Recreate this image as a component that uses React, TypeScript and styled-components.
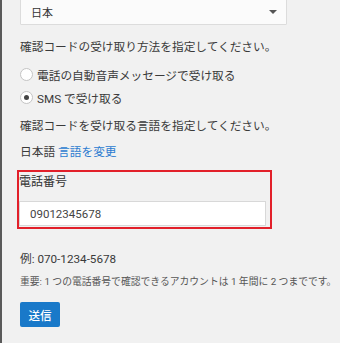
import React, { useState } from 'react';
import styled, { createGlobalStyle } from 'styled-components';

const GlobalStyle = createGlobalStyle`
  html, body {
    margin: 0;
    padding: 0;
    background: #f1f1f1;
  }
  * {
    box-sizing: border-box;
  }
`;

const Page = styled.div`
  width: 340px;
  height: 343px;
  overflow: hidden;
  background: #f1f1f1;
  border-left: 2px solid #5a5a5a;
  padding-left: 18px;
  font-family: Roboto, 'Noto Sans CJK JP', sans-serif;
  color: #3a3a3a;
`;

const Select = styled.div`
  width: 267px;
  height: 26px;
  margin-top: -1px;
  background: #fbfbfb;
  border: 1px solid #dcdcdc;
  border-radius: 1px;
  display: flex;
  align-items: center;
  justify-content: space-between;
  padding: 0 9px 0 10px;
  font-size: 11px;
  color: #333;
`;

const Caret = styled.span`
  width: 0;
  height: 0;
  border-left: 4px solid transparent;
  border-right: 4px solid transparent;
  border-top: 4px solid #555;
`;

const Text = styled.div<{ $mt: number }>`
  margin-top: ${({ $mt }) => $mt}px;
  font-size: 11.7px;
  line-height: 20px;
  white-space: nowrap;
`;

const RadioList = styled.div`
  margin-top: 6px;
`;

const RadioRow = styled.label`
  display: flex;
  align-items: center;
  height: 23px;
  gap: 4px;
  font-size: 11.7px;
  cursor: pointer;
`;

const RadioCircle = styled.span<{ $checked: boolean }>`
  width: 13px;
  height: 13px;
  border-radius: 50%;
  border: 1px solid #c4c4c4;
  background: #fff;
  display: flex;
  align-items: center;
  justify-content: center;
  &::after {
    content: '';
    width: 5px;
    height: 5px;
    border-radius: 50%;
    background: ${({ $checked }) => ($checked ? '#444' : 'transparent')};
  }
`;

const Link = styled.a`
  color: #2b7bd0;
  text-decoration: none;
  margin-left: 3px;
`;

const Highlight = styled.div`
  margin-top: 8px;
  margin-left: -3px;
  width: 255px;
  border: 2px solid #e2202a;
  padding: 0 0 1px 0;
`;

const FieldLabel = styled.div`
  font-size: 12px;
  line-height: 20px;
  font-weight: 400;
  color: #333;
`;

const PhoneInput = styled.input`
  display: block;
  margin-top: 9px;
  width: 247px;
  height: 25px;
  border: 1px solid #d8d8d8;
  background: #fff;
  padding: 0 10px;
  font-family: Roboto, 'Noto Sans CJK JP', sans-serif;
  font-size: 11.5px;
  color: #444;
  outline: none;
`;

const Note = styled.div`
  margin-top: 5px;
  font-size: 9.8px;
  line-height: 16px;
  color: #555;
  white-space: nowrap;
`;

const SubmitButton = styled.button`
  margin-top: 12px;
  width: 40px;
  height: 25px;
  border: none;
  border-radius: 2px;
  background: #1979c9;
  color: #fff;
  font-family: Roboto, 'Noto Sans CJK JP', sans-serif;
  font-size: 11.5px;
  font-weight: 500;
  padding: 0;
`;

const options = [
  { value: 'voice', label: '電話の自動音声メッセージで受け取る' },
  { value: 'sms', label: 'SMS で受け取る' },
];

const App = () => {
  const [method, setMethod] = useState('sms');
  const [phone, setPhone] = useState('09012345678');

  return (
    <Page>
      <GlobalStyle />
      <Select>
        日本
        <Caret />
      </Select>
      <Text $mt={12}>確認コードの受け取り方法を指定してください。</Text>
      <RadioList>
        {options.map((o) => (
          <RadioRow key={o.value} onClick={() => setMethod(o.value)}>
            <RadioCircle $checked={method === o.value} />
            {o.label}
          </RadioRow>
        ))}
      </RadioList>
      <Text $mt={7}>確認コードを受け取る言語を指定してください。</Text>
      <Text $mt={6}>
        日本語<Link href="#">言語を変更</Link>
      </Text>
      <Highlight>
        <FieldLabel>電話番号</FieldLabel>
        <PhoneInput value={phone} onChange={(e) => setPhone(e.target.value)} />
      </Highlight>
      <Text $mt={20}>例: 070-1234-5678</Text>
      <Note>重要: 1 つの電話番号で確認できるアカウントは 1 年間に 2 つまでです。</Note>
      <SubmitButton>送信</SubmitButton>
    </Page>
  );
};

export default App;
